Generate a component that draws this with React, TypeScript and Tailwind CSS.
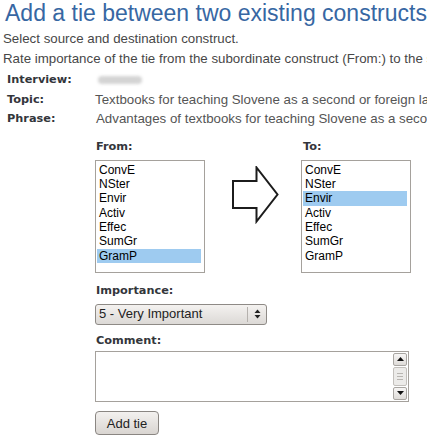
import React from "react";

const items = ["ConvE", "NSter", "Envir", "Activ", "Effec", "SumGr", "GramP"];

function ListBox({ selected }: { selected: string }) {
  return (
    <div className="h-[113px] w-[110px] border border-[#a5a19c] bg-white pt-[2px] pl-px pr-[3px]">
      {items.map((it) => (
        <div
          key={it}
          className={`h-[14.4px] pl-[2px] text-[12px] leading-[14.4px] text-black ${
            it === selected ? "bg-[#9ecbf0]" : ""
          }`}
        >
          {it}
        </div>
      ))}
    </div>
  );
}

function Label({ children }: { children: React.ReactNode }) {
  return (
    <div className="font-['DejaVu_Sans',Verdana,sans-serif] text-[11.3px] font-bold leading-[14px] text-[#33363b]">
      {children}
    </div>
  );
}

export default function App() {
  return (
    <div className="h-[436px] w-[427px] overflow-hidden whitespace-nowrap bg-white font-['Liberation_Sans',Arial,sans-serif]">
      <h1 className="pl-[5px] text-[23px] leading-[27px] text-[#3767a3]">
        Add a tie between two existing constructs
      </h1>
      <div className="mt-[2px] pl-[3px] text-[13.3px] leading-[20px] text-[#474747]">
        <div>Select source and destination construct.</div>
        <div>Rate importance of the tie from the subordinate construct (From:) to the superordinate construct (To:).</div>
      </div>

      <div className="mt-[1px] grid grid-cols-[89px_1fr] pl-[7px] text-[13.3px] leading-[19.5px]">
        <div className="flex items-center font-['DejaVu_Sans',Verdana,sans-serif] text-[11.3px] font-bold text-[#33363b]">Interview:</div>
        <div className="flex items-center pl-[2px]">
          <span className="h-[8px] w-[44px] rounded-full bg-[#d4d4d4] blur-[1.5px]" />
        </div>
        <div className="flex items-center font-['DejaVu_Sans',Verdana,sans-serif] text-[11.3px] font-bold text-[#33363b]">Topic:</div>
        <div className="-ml-[1px] text-[#555]">Textbooks for teaching Slovene as a second or foreign language</div>
        <div className="flex items-center font-['DejaVu_Sans',Verdana,sans-serif] text-[11.3px] font-bold text-[#33363b]">Phrase:</div>
        <div className="text-[#555]">Advantages of textbooks for teaching Slovene as a second or foreign language</div>
      </div>

      <div className="ml-[95px] mt-[11px] flex flex-col">
        <div className="flex">
          <div className="flex flex-col gap-[6px]">
            <div className="pl-px"><Label>From:</Label></div>
            <ListBox selected="GramP" />
          </div>
          <div className="ml-[27px] mr-[22px] flex items-start pt-[26px]">
            <svg width="47" height="58" viewBox="0 0 47 58" fill="none">
              <path
                d="M1 15 H24.5 V1.5 L45.5 28.5 L24.5 55.5 V42 H1 Z"
                stroke="#1c1c1c"
                strokeWidth="2"
                strokeLinejoin="miter"
              />
            </svg>
          </div>
          <div className="flex flex-col gap-[6px]">
            <div className="pl-[2px]"><Label>To:</Label></div>
            <ListBox selected="Envir" />
          </div>
        </div>

        <div className="mt-[11px] pl-px"><Label>Importance:</Label></div>
        <div className="mt-[6px] flex h-[21px] w-[172px] items-center rounded-[3px] border border-[#8e8a86] bg-gradient-to-b from-[#f4f2f0] to-[#dcd9d6] text-[13px] text-[#222]">
          <span className="flex-1 pl-[3px]">5 - Very Important</span>
          <span className="h-[15px] w-px bg-[#b5b1ad]" />
          <span className="flex w-[18px] justify-center">
            <svg width="7" height="10" viewBox="0 0 7 10">
              <path d="M3.5 0.5 L6.5 4 H0.5 Z" fill="#222" />
              <path d="M0.5 6 H6.5 L3.5 9.5 Z" fill="#222" />
            </svg>
          </span>
        </div>

        <div className="mt-[9px] pl-px"><Label>Comment:</Label></div>
        <div className="mt-[3px] flex h-[51px] w-[314px] justify-end border border-[#a5a19c] bg-white p-px">
          <div className="flex w-[14px] flex-col gap-px">
            <div className="flex h-[13px] items-center justify-center rounded-[2px] border border-[#a9a6a2] bg-gradient-to-b from-[#f7f6f5] to-[#dedbd8]">
              <svg width="7" height="4" viewBox="0 0 7 4"><path d="M3.5 0 L7 4 H0 Z" fill="#111" /></svg>
            </div>
            <div className="flex flex-1 flex-col items-center justify-center gap-[2px] rounded-[2px] border border-[#c3c0bc] bg-[#ecebe9]">
              <span className="h-px w-[6px] bg-[#b8b5b1]" />
              <span className="h-px w-[6px] bg-[#b8b5b1]" />
              <span className="h-px w-[6px] bg-[#b8b5b1]" />
            </div>
            <div className="flex h-[13px] items-center justify-center rounded-[2px] border border-[#a9a6a2] bg-gradient-to-b from-[#f7f6f5] to-[#dedbd8]">
              <svg width="7" height="4" viewBox="0 0 7 4"><path d="M0 0 H7 L3.5 4 Z" fill="#111" /></svg>
            </div>
          </div>
        </div>

        <div className="mt-[9px]">
          <button className="h-[24px] w-[64px] rounded-[4px] border border-[#8a8682] bg-gradient-to-b from-[#f3f1ef] to-[#d9d5d1] text-[13px] text-[#222]">
            Add tie
          </button>
        </div>
      </div>
    </div>
  );
}
